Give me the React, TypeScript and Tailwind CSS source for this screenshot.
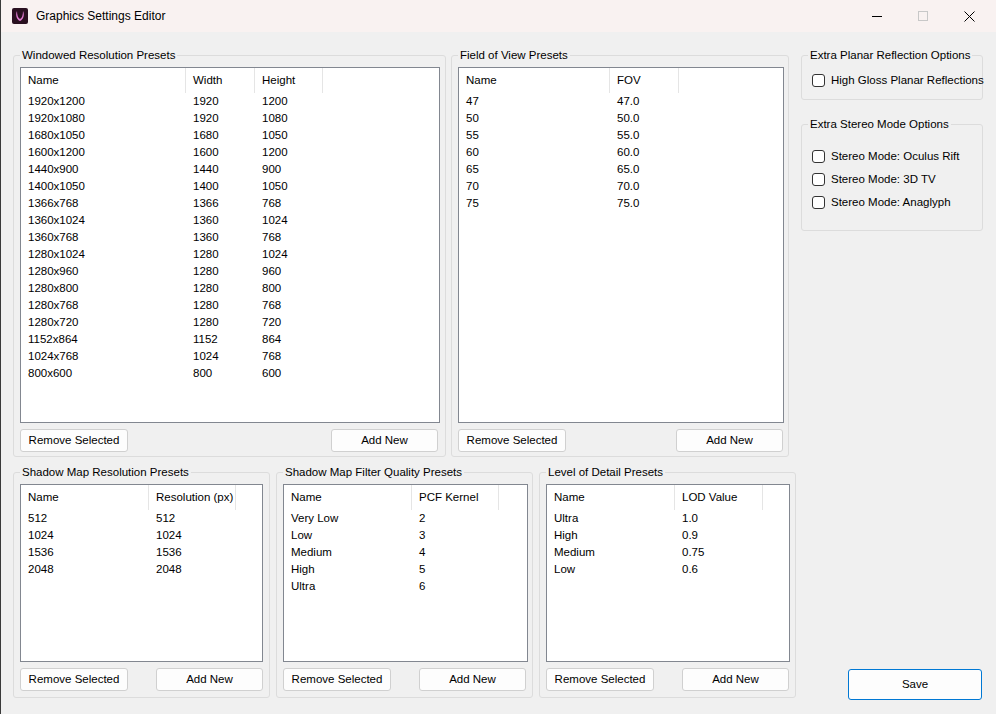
import React from "react";

type Col = { title: string; w: number };

function ListView({ cols, rows, w, h }: { cols: Col[]; rows: string[][]; w: number; h: number }) {
  return (
    <div className="bg-white border border-[#828790] overflow-hidden" style={{ width: w, height: h }}>
      <div className="flex h-[25px] items-center">
        {cols.map((c, i) => (
          <div key={i} className="h-full flex items-center pl-[7px] border-r border-[#e5e5e5] whitespace-nowrap overflow-hidden" style={{ width: c.w }}>
            {c.title}
          </div>
        ))}
      </div>
      {rows.map((r, i) => (
        <div key={i} className="flex h-[17px] items-center">
          {r.map((v, j) => (
            <div key={j} className="pl-[7px] whitespace-nowrap" style={{ width: cols[j].w }}>
              {v}
            </div>
          ))}
        </div>
      ))}
    </div>
  );
}

function Btn({ label, w }: { label: string; w: number }) {
  return (
    <div
      className="h-[23px] bg-[#fdfdfd] border border-[#d0d0d0] rounded-[3px] flex items-center justify-center whitespace-nowrap"
      style={{ width: w }}
    >
      {label}
    </div>
  );
}

function Group({
  title,
  w,
  h,
  children,
}: {
  title: string;
  w: number;
  h: number;
  children: React.ReactNode;
}) {
  return (
    <div className="relative border border-[#dcdcdc] rounded-[3px] shrink-0" style={{ width: w, height: h }}>
      <div className="absolute -top-[9px] left-[6px] bg-[#f0f0f0] px-[2px] leading-[16px] whitespace-nowrap">{title}</div>
      {children}
    </div>
  );
}

function ListGroup({
  title,
  w,
  h,
  lw,
  lh,
  cols,
  rows,
  addLeft,
}: {
  title: string;
  w: number;
  h: number;
  lw: number;
  lh: number;
  cols: Col[];
  rows: string[][];
  addLeft: number;
}) {
  return (
    <Group title={title} w={w} h={h}>
      <div className="ml-[6px] mt-[11px]">
        <ListView cols={cols} rows={rows} w={lw} h={lh} />
      </div>
      <div className="flex mt-[6px] ml-[6px]">
        <Btn label="Remove Selected" w={108} />
        <div style={{ width: addLeft }} />
        <Btn label="Add New" w={107} />
      </div>
    </Group>
  );
}

function Check({ label }: { label: string }) {
  return (
    <div className="flex items-center h-[17px] whitespace-nowrap">
      <div className="w-[13px] h-[13px] border border-[#333] rounded-[3px] bg-white shrink-0" />
      <div className="ml-[6px]">{label}</div>
    </div>
  );
}

const res = [
  ["1920x1200", "1920", "1200"],
  ["1920x1080", "1920", "1080"],
  ["1680x1050", "1680", "1050"],
  ["1600x1200", "1600", "1200"],
  ["1440x900", "1440", "900"],
  ["1400x1050", "1400", "1050"],
  ["1366x768", "1366", "768"],
  ["1360x1024", "1360", "1024"],
  ["1360x768", "1360", "768"],
  ["1280x1024", "1280", "1024"],
  ["1280x960", "1280", "960"],
  ["1280x800", "1280", "800"],
  ["1280x768", "1280", "768"],
  ["1280x720", "1280", "720"],
  ["1152x864", "1152", "864"],
  ["1024x768", "1024", "768"],
  ["800x600", "800", "600"],
];

const fov = [
  ["47", "47.0"],
  ["50", "50.0"],
  ["55", "55.0"],
  ["60", "60.0"],
  ["65", "65.0"],
  ["70", "70.0"],
  ["75", "75.0"],
];

export default function App() {
  return (
    <div
      className="w-[996px] h-[714px] bg-[#f0f0f0] text-[11.5px] text-black border-l border-[#3a3a3a] overflow-hidden"
      style={{ fontFamily: '"Liberation Sans", Arial, sans-serif' }}
    >
      <div className="h-[32px] bg-[#f9f2f1] flex items-center">
        <div className="ml-[11px] w-[16px] h-[16px] bg-[#2a1020] rounded-[2px] flex items-center justify-center">
          <svg width="12" height="12" viewBox="0 0 12 12">
            <path d="M3 1 C1 5 3 10 6 11 C9 10 11 5 9 1 C9 5 8 8 6 9 C4 8 3 5 3 1Z" fill="#e07ad0" />
          </svg>
        </div>
        <div className="ml-[8px] text-[12px]">Graphics Settings Editor</div>
        <div className="flex-1" />
        <div className="w-[46px] flex justify-center">
          <div className="w-[10px] h-px bg-black" />
        </div>
        <div className="w-[46px] flex justify-center">
          <div className="w-[10px] h-[10px] border border-[#c8c8c8]" />
        </div>
        <div className="w-[46px] flex justify-center mr-[4px]">
          <svg width="11" height="11" viewBox="0 0 11 11">
            <path d="M0.5 0.5 L10.5 10.5 M10.5 0.5 L0.5 10.5" stroke="#000" strokeWidth="1" />
          </svg>
        </div>
      </div>
      <div className="flex pl-[12px] pt-[23px]">
        <div className="w-[783px] shrink-0">
          <div className="flex gap-[5px]">
            <ListGroup
              title="Windowed Resolution Presets"
              w={433}
              h={402}
              lw={420}
              lh={356}
              cols={[
                { title: "Name", w: 165 },
                { title: "Width", w: 69 },
                { title: "Height", w: 68 },
              ]}
              rows={res}
              addLeft={203}
            />
            <ListGroup
              title="Field of View Presets"
              w={338}
              h={402}
              lw={326}
              lh={356}
              cols={[
                { title: "Name", w: 151 },
                { title: "FOV", w: 69 },
              ]}
              rows={fov}
              addLeft={110}
            />
          </div>
          <div className="flex gap-[6px] mt-[15px]">
            <ListGroup
              title="Shadow Map Resolution Presets"
              w={257}
              h={226}
              lw={243}
              lh={178}
              cols={[
                { title: "Name", w: 128 },
                { title: "Resolution (px)", w: 87 },
              ]}
              rows={[
                ["512", "512"],
                ["1024", "1024"],
                ["1536", "1536"],
                ["2048", "2048"],
              ]}
              addLeft={28}
            />
            <ListGroup
              title="Shadow Map Filter Quality Presets"
              w={257}
              h={226}
              lw={245}
              lh={178}
              cols={[
                { title: "Name", w: 128 },
                { title: "PCF Kernel", w: 87 },
              ]}
              rows={[
                ["Very Low", "2"],
                ["Low", "3"],
                ["Medium", "4"],
                ["High", "5"],
                ["Ultra", "6"],
              ]}
              addLeft={28}
            />
            <ListGroup
              title="Level of Detail Presets"
              w={257}
              h={226}
              lw={244}
              lh={178}
              cols={[
                { title: "Name", w: 128 },
                { title: "LOD Value", w: 88 },
              ]}
              rows={[
                ["Ultra", "1.0"],
                ["High", "0.9"],
                ["Medium", "0.75"],
                ["Low", "0.6"],
              ]}
              addLeft={28}
            />
          </div>
        </div>
        <div className="ml-[5px] w-[182px] flex flex-col">
          <Group title="Extra Planar Reflection Options" w={182} h={45}>
            <div className="ml-[10px] mt-[16px]">
              <Check label="High Gloss Planar Reflections" />
            </div>
          </Group>
          <div className="mt-[24px]">
            <Group title="Extra Stereo Mode Options" w={182} h={107}>
              <div className="ml-[10px] mt-[23px] flex flex-col gap-[6px]">
                <Check label="Stereo Mode: Oculus Rift" />
                <Check label="Stereo Mode: 3D TV" />
                <Check label="Stereo Mode: Anaglyph" />
              </div>
            </Group>
          </div>
          <div className="mt-[438px] ml-[47px] w-[134px] h-[31px] bg-[#fdfdfd] border border-[#0078d4] rounded-[3px] flex items-center justify-center">
            Save
          </div>
        </div>
      </div>
    </div>
  );
}
